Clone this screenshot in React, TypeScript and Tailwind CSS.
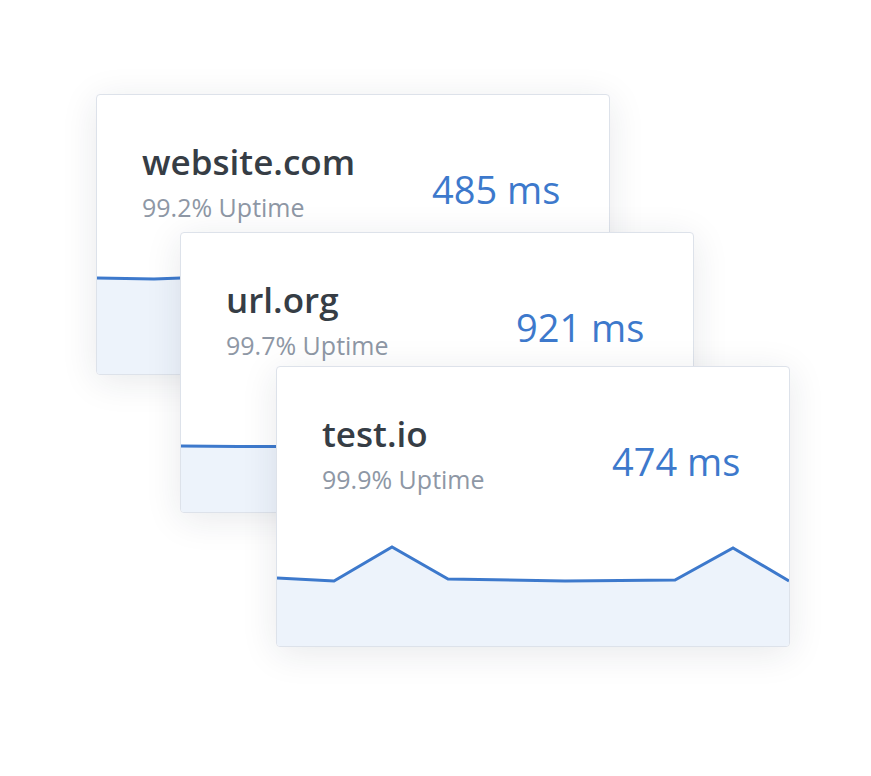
type Site = {
  name: string
  uptime: string
  ms: string
  left: string
  points: string
}

// chart area is 512 x 110, sits at the bottom of the card
function Chart({ points }: { points: string }) {
  const area = `0,110 ${points} 512,110`
  return (
    <svg className="block w-[512px] h-[110px]" viewBox="0 0 512 110" fill="none">
      <polygon points={area} fill="#edf3fb" />
      <polyline points={points} stroke="#3d79cc" strokeWidth="3" strokeLinejoin="miter" fill="none" />
    </svg>
  )
}

function Card({ site, className }: { site: Site; className: string }) {
  return (
    <div
      className={`absolute w-[514px] h-[281px] flex flex-col overflow-hidden rounded border border-[#dde2ea] bg-white shadow-[0_6px_36px_rgba(30,40,60,0.1)] ${className}`}
    >
      <div className="flex pl-[45px]">
        <div className="w-[290px] pt-[49px] flex flex-col">
          <span className="text-[35px] leading-none font-semibold text-[#363d45]">{site.name}</span>
          <span className="mt-[16px] text-[25px] leading-none text-[#8e97a5]">{site.uptime}</span>
        </div>
        <div className="pt-[75px]">
          <span className="text-[38px] leading-none text-[#3d79cc]">{site.ms}</span>
        </div>
      </div>
      <div className="mt-auto">
        <Chart points={site.points} />
      </div>
    </div>
  )
}

const sites: Site[] = [
  {
    name: 'website.com',
    uptime: '99.2% Uptime',
    ms: '485 ms',
    left: 'left-[96px] top-[94px]',
    points: '0,14 57,15 84,14 140,13 200,14 290,15 400,14 456,13 512,14',
  },
  {
    name: 'url.org',
    uptime: '99.7% Uptime',
    ms: '921 ms',
    left: 'left-[180px] top-[232px]',
    points: '0,44 57,44.5 96,44.5 150,12 205,44 300,45 400,44 456,13 512,44',
  },
  {
    name: 'test.io',
    uptime: '99.9% Uptime',
    ms: '474 ms',
    left: 'left-[276px] top-[366px]',
    points: '0,42 57,45 115,11 171,43 288,45 398,44 456,12 512,45',
  },
]

export default function App() {
  return (
    <div className="relative w-[871px] h-[776px] bg-white font-['Open_Sans',sans-serif] overflow-hidden">
      {sites.map((s) => (
        <Card key={s.name} site={s} className={s.left} />
      ))}
    </div>
  )
}
